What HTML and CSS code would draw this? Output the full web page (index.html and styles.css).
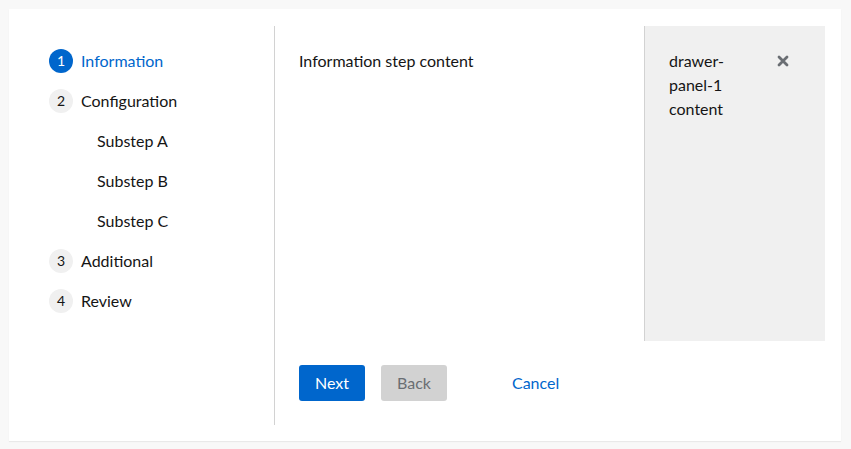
FILE: index.html
```html
<!DOCTYPE html>
<html lang="en">
<head>
<meta charset="utf-8">
<title>Wizard</title>
<link rel="stylesheet" href="styles.css">
</head>
<body>
<div class="card">
  <nav class="nav">
    <ol class="nav-list">
      <li class="nav-item current"><span class="num">1</span><span class="label">Information</span></li>
      <li class="nav-item"><span class="num">2</span><span class="label">Configuration</span></li>
      <li class="nav-item sub"><span class="label">Substep A</span></li>
      <li class="nav-item sub"><span class="label">Substep B</span></li>
      <li class="nav-item sub"><span class="label">Substep C</span></li>
      <li class="nav-item"><span class="num">3</span><span class="label">Additional</span></li>
      <li class="nav-item"><span class="num">4</span><span class="label">Review</span></li>
    </ol>
  </nav>
  <div class="main">
    <div class="body">
      <div class="content">Information step content</div>
      <aside class="drawer">
        <div class="drawer-text">drawer-<br>panel-1<br>content</div>
        <button class="close" aria-label="Close">
          <svg width="12" height="12" viewBox="0 0 12 12"><path d="M2 2 L10 10 M10 2 L2 10" stroke="#6a6e73" stroke-width="2.8" stroke-linecap="round"/></svg>
        </button>
      </aside>
    </div>
    <div class="footer">
      <button class="btn primary">Next</button>
      <button class="btn disabled">Back</button>
      <button class="btn link">Cancel</button>
    </div>
  </div>
</div>
</body>
</html>
```

FILE: styles.css
```css
* { box-sizing: border-box; }
html, body { margin: 0; }
body {
  background: #f8f8f8;
  padding: 9px 10px 8px 9px;
  font-family: Lato, "Noto Sans", sans-serif;
  font-size: 16px;
  color: #151515;
}
.card {
  background: #fff;
  height: 432px;
  padding: 17px 16px 16px 16px;
  display: flex;
  box-shadow: 0 1px 1px rgba(0,0,0,0.06);
}
.nav {
  width: 250px;
  border-right: 1px solid #d2d2d2;
  padding: 23px 0 0 24px;
}
.nav-list {
  list-style: none;
  margin: 0;
  padding: 0;
  display: flex;
  flex-direction: column;
  gap: 16px;
}
.nav-item {
  display: flex;
  align-items: center;
  height: 24px;
  gap: 8px;
  line-height: 24px;
}
.nav-item.sub { padding-left: 48px; }
.num {
  width: 24px;
  height: 24px;
  border-radius: 50%;
  background: #f0f0f0;
  display: flex;
  align-items: center;
  justify-content: center;
  font-size: 14px;
}
.current .num { background: #0066cc; color: #fff; }
.current .label { color: #0066cc; }
.main {
  flex: 1;
  display: flex;
  flex-direction: column;
}
.body {
  flex: 0 0 315px;
  display: flex;
}
.content {
  flex: 1;
  padding: 23px 24px 24px;
  line-height: 24px;
}
.drawer {
  width: 181px;
  background: #f0f0f0;
  border-left: 1px solid #d2d2d2;
  padding: 23px 24px 24px;
  display: flex;
  justify-content: space-between;
  align-items: flex-start;
}
.drawer-text { line-height: 24px; }
.close {
  border: 0;
  background: none;
  padding: 0;
  margin: 6px 12px 0 0;
  display: flex;
}
.footer {
  display: flex;
  gap: 16px;
  padding: 24px 24px;
  align-items: center;
}
.btn {
  font: inherit;
  border: 0;
  border-radius: 3px;
  height: 36px;
  padding: 0 16px;
  line-height: 24px;
}
.primary { background: #0066cc; color: #fff; }
.disabled { background: #d2d2d2; color: #6a6e73; }
.link { background: none; color: #0066cc; margin-left: 33px; }
```
